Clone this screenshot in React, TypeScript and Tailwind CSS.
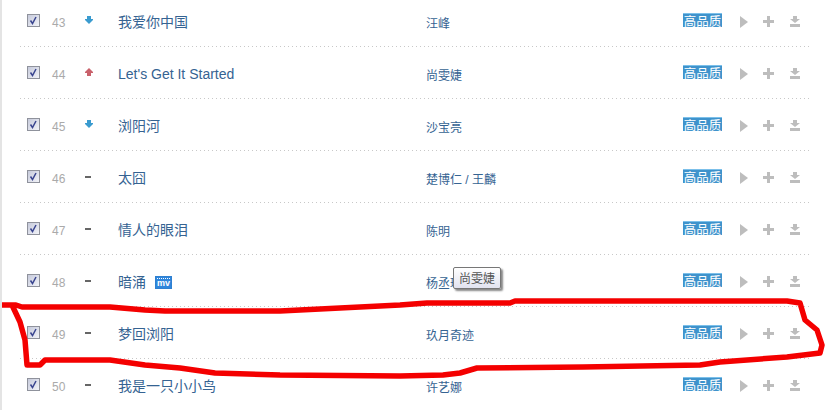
type Song = {
  no: number;
  trend: "up" | "down" | "same";
  title: string;
  artist: string;
  mv?: boolean;
};

const songs: Song[] = [
  { no: 43, trend: "down", title: "我爱你中国", artist: "汪峰" },
  { no: 44, trend: "up", title: "Let's Get It Started", artist: "尚雯婕" },
  { no: 45, trend: "down", title: "浏阳河", artist: "沙宝亮" },
  { no: 46, trend: "same", title: "太囧", artist: "楚博仁 / 王麟" },
  { no: 47, trend: "same", title: "情人的眼泪", artist: "陈明" },
  { no: 48, trend: "same", title: "暗涌", artist: "杨丞琳", mv: true },
  { no: 49, trend: "same", title: "梦回浏阳", artist: "玖月奇迹" },
  { no: 50, trend: "same", title: "我是一只小小鸟", artist: "许艺娜" },
];

function Checkbox() {
  return (
    <span className="flex h-[13px] w-[13px] items-center justify-center border border-[#8f929c] bg-gradient-to-br from-[#c6cadb] to-[#f2f3f8]">
      <svg width="11" height="11" viewBox="0 0 11 11">
        <path d="M2.5 5.5 L4.5 8.5 L8 2" fill="none" stroke="#39448f" strokeWidth="1.5" />
      </svg>
    </span>
  );
}

function Trend({ trend }: { trend: Song["trend"] }) {
  if (trend === "same") {
    return <span className="mt-[1px] block h-[2px] w-[6px] bg-[#666]" />;
  }
  return (
    <svg width="8" height="8" viewBox="0 0 8 8" className="-mt-[1px]">
      {trend === "down" ? (
        <path d="M2 0 H6 V3 H8 V4 L4 8 L0 4 V3 H2 Z" fill="#3a9bcf" />
      ) : (
        <path d="M2 8 H6 V5 H8 V4 L4 0 L0 4 V5 H2 Z" fill="#c9616b" />
      )}
    </svg>
  );
}

function MvBadge() {
  return (
    <span className="ml-[9px] mt-[1px] flex h-[13px] w-[17px] flex-col justify-between border border-[#2f80d0] bg-[#2f86dc] py-[1px]">
      <span className="mx-[1px] h-px bg-[repeating-linear-gradient(90deg,#fff_0,#fff_1px,transparent_1px,transparent_2px)]" />
      <span className="flex-1 text-center font-['Liberation_Sans',sans-serif] text-[9px] font-bold leading-[8px] text-white">
        mv
      </span>
      <span className="mx-[1px] h-px bg-[repeating-linear-gradient(90deg,#fff_0,#fff_1px,transparent_1px,transparent_2px)]" />
    </span>
  );
}

function Actions() {
  return (
    <div className="flex items-center pt-[2px]">
      <span className="w-[23px]">
        <svg width="8" height="12" viewBox="0 0 8 12" className="block">
          <path d="M0 0 L8 6 L0 12 Z" fill="#bdbdbd" />
        </svg>
      </span>
      <span className="w-[27px]">
        <svg width="11" height="11" viewBox="0 0 11 11" className="block">
          <path d="M4 0 H7 V4 H11 V7 H7 V11 H4 V7 H0 V4 H4 Z" fill="#bdbdbd" />
        </svg>
      </span>
      <svg width="10" height="11" viewBox="0 0 10 11" className="block">
        <path d="M3 0 H7 V3 H10 L5 7 L0 3 H3 Z M0 8 H10 V11 H0 Z" fill="#bdbdbd" />
      </svg>
    </div>
  );
}

function Row({ song }: { song: Song }) {
  return (
    <div>
      <div className="flex h-[51px] items-center pl-[7px]">
        <div className="w-[25px]">
          <Checkbox />
        </div>
        <div className="w-[33px] pt-[5px] font-['Liberation_Sans',sans-serif] text-[12px] text-[#aaa]">
          {song.no}
        </div>
        <div className="flex w-[33px] items-center">
          <Trend trend={song.trend} />
        </div>
        <div className="flex w-[308px] items-center pt-[3px] font-['Liberation_Sans','Noto_Sans_CJK_SC',sans-serif] text-[14px] text-[#356392]">
          {song.title}
          {song.mv && <MvBadge />}
        </div>
        <div className="w-[257px] pt-[7px] font-['Liberation_Sans','Noto_Sans_CJK_SC',sans-serif] text-[12px] text-[#356392]">
          {song.artist}
        </div>
        <div className="w-[57px]">
          <span className="-mt-[1px] block h-[14px] w-[39px] border-t border-[#7cc0ea] bg-[#3f93cc] text-center font-['Noto_Sans_CJK_SC',sans-serif] text-[12.5px] leading-[13px] text-white">
            高品质
          </span>
        </div>
        <Actions />
      </div>
      <div className="h-px bg-[repeating-linear-gradient(90deg,#c8c8c8_0,#c8c8c8_1px,transparent_1px,transparent_4px)]" />
    </div>
  );
}

export default function App() {
  return (
    <div className="relative h-[410px] w-[837px] overflow-hidden border-l-2 border-[#e4e4e4] bg-white">
      <div className="-mt-[5px] ml-[18px] w-[792px]">
        {songs.map((song) => (
          <Row key={song.no} song={song} />
        ))}
      </div>

      {/* tooltip over the artist column */}
      <div className="absolute left-[451px] top-[267px] h-[22px] w-[48px] rounded-[2px] border border-[#777] bg-gradient-to-b from-white to-[#e2e3f0] text-center font-['Noto_Sans_CJK_SC',sans-serif] text-[12px] leading-[20px] text-[#555] shadow-[2px_2px_2px_#888]">
        尚雯婕
      </div>

      {/* hand-drawn red marker */}
      <svg className="absolute -left-[2px] top-0" width="837" height="410" viewBox="0 0 837 410">
        <path
          d="M0 305 L16 305 L22 307 L65 307 L110 307 L145 310 L165 311 L280 311 L400 305 L427 303 L510 303 L515 301 L787 301 L800 303 L805 320 L817 330 L822 345 L820 353 L787 357 L720 362 L700 365 L583 367 L477 368 L460 373 L443 375 L400 376 L280 375 L215 373 L180 368 L145 365 L110 360 L45 360 L40 365 L27 365 L25 340 L20 322 L12 305"
          fill="none"
          stroke="#f40000"
          strokeWidth="5.5"
          strokeLinejoin="round"
        />
      </svg>
    </div>
  );
}
